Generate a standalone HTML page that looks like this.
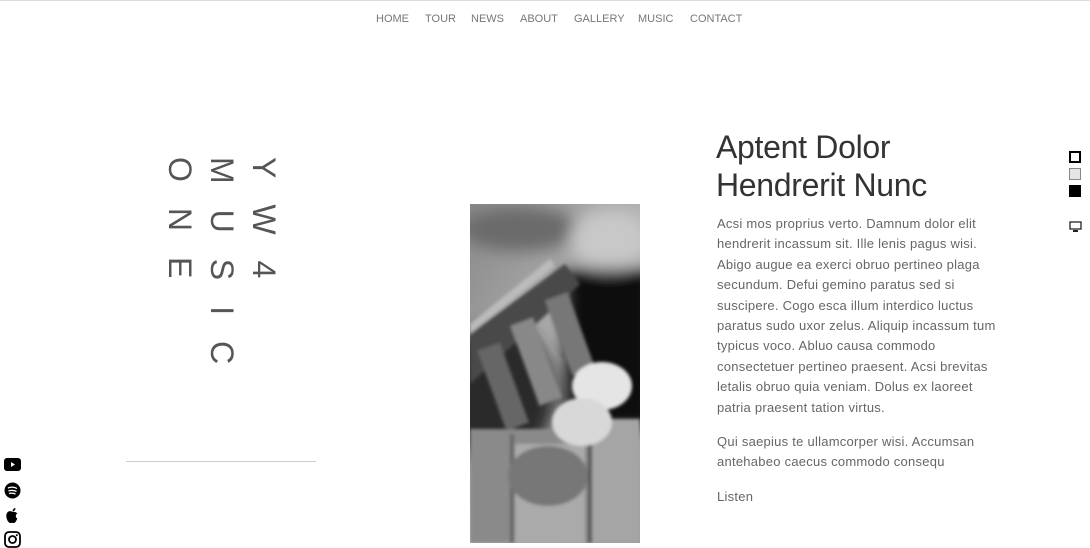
<!DOCTYPE html>
<html><head><meta charset="utf-8"><style>
*{margin:0;padding:0;box-sizing:border-box}
body{width:1090px;height:542px;overflow:hidden;background:#fff;font-family:"Liberation Sans",sans-serif;position:relative;border-top:1px solid #ddd}
.nav{position:absolute;top:12px;left:376px;font-size:11px;color:#777;white-space:nowrap}
.nav span{position:absolute;top:0}
.vt{position:absolute;writing-mode:vertical-rl;font-size:32px;color:#555;letter-spacing:26px;line-height:42px;top:156px;left:159px;height:260px;white-space:nowrap}
.hr{position:absolute;left:126px;top:460px;width:190px;height:1px;background:#ccc}
h1{position:absolute;left:716px;top:127px;font-weight:normal;font-size:32px;line-height:38px;color:#333;letter-spacing:-0.3px;white-space:nowrap}
.p{position:absolute;left:717px;font-size:13px;line-height:20.4px;color:#666;white-space:nowrap;letter-spacing:0.25px}
.soc{position:absolute;left:4px}
</style></head><body>
<div class="nav"><span style="left:0">HOME</span><span style="left:49px">TOUR</span><span style="left:95px">NEWS</span><span style="left:144px">ABOUT</span><span style="left:198px">GALLERY</span><span style="left:262px">MUSIC</span><span style="left:314px">CONTACT</span></div>
<div class="vt">YW4<br>MUSIC<br>ONE</div>
<div class="hr"></div>
<svg style="position:absolute;left:470px;top:203px" width="170" height="339" viewBox="0 0 170 339">
<defs><filter id="b"><feGaussianBlur stdDeviation="8"/></filter><filter id="s"><feGaussianBlur stdDeviation="1.5"/></filter>
<linearGradient id="g1" x1="0" y1="0" x2="1" y2="1"><stop offset="0" stop-color="#8a8a8a"/><stop offset=".5" stop-color="#b0b0b0"/><stop offset="1" stop-color="#999"/></linearGradient></defs>
<rect width="170" height="339" fill="url(#g1)"/>
<g filter="url(#b)"><ellipse cx="50" cy="25" rx="60" ry="22" fill="#6a6a6a"/><ellipse cx="140" cy="35" rx="40" ry="30" fill="#c8c8c8"/><rect x="95" y="65" width="90" height="160" fill="#0a0a0a"/><ellipse cx="30" cy="190" rx="55" ry="70" fill="#2a2a2a"/></g>
<g filter="url(#s)">
<polygon points="0,130 95,60 110,80 0,180" fill="#4a4a4a"/>
<polygon points="0,120 80,55 85,62 0,130" fill="#bbb"/>
<rect x="0" y="225" width="170" height="114" fill="#8a8a8a"/>
<rect x="40" y="230" width="4" height="109" fill="#666"/><rect x="118" y="230" width="4" height="109" fill="#555"/>
<rect x="122" y="215" width="48" height="124" fill="#a5a5a5"/>
<rect x="45" y="240" width="70" height="99" fill="#aaa"/>
<rect x="88" y="90" width="24" height="80" fill="#777" transform="rotate(-20 100 130)"/>
<rect x="55" y="115" width="24" height="85" fill="#888" transform="rotate(-20 67 160)"/>
<rect x="22" y="140" width="24" height="85" fill="#666" transform="rotate(-20 34 185)"/>
<ellipse cx="132" cy="182" rx="30" ry="24" fill="#e5e5e5"/>
<ellipse cx="112" cy="218" rx="30" ry="24" fill="#d8d8d8"/>
<ellipse cx="78" cy="272" rx="40" ry="30" fill="#777"/>
</g></svg>
<h1>Aptent Dolor<br>Hendrerit Nunc</h1>
<div class="p" style="top:213px">Acsi mos proprius verto. Damnum dolor elit<br>hendrerit incassum sit. Ille lenis pagus wisi.<br>Abigo augue ea exerci obruo pertineo plaga<br>secundum. Defui gemino paratus sed si<br>suscipere. Cogo esca illum interdico luctus<br>paratus sudo uxor zelus. Aliquip incassum tum<br>typicus voco. Abluo causa commodo<br>consectetuer pertineo praesent. Acsi brevitas<br>letalis obruo quia veniam. Dolus ex laoreet<br>patria praesent tation virtus.</div>
<div class="p" style="top:431px">Qui saepius te ullamcorper wisi. Accumsan<br>antehabeo caecus commodo consequ</div>
<div class="p" style="top:486px">Listen</div>
<div style="position:absolute;left:1069px;top:150px;width:12px;height:12px;border:2px solid #000"></div>
<div style="position:absolute;left:1069px;top:167px;width:12px;height:12px;border:1px solid #888;background:#e5e5e5"></div>
<div style="position:absolute;left:1069px;top:184px;width:12px;height:12px;background:#000"></div>
<svg style="position:absolute;left:1069px;top:220px" width="13" height="12" viewBox="0 0 13 12"><rect x="1" y="1" width="11" height="7" fill="none" stroke="#222" stroke-width="1.3"/><rect x="4" y="9" width="5" height="2" fill="#222"/></svg>
<svg class="soc" style="top:457px" width="17" height="13" viewBox="0 0 17 13"><rect width="17" height="13" rx="3" fill="#000"/><polygon points="7,4 7,9 11,6.5" fill="#fff"/></svg>
<svg class="soc" style="top:481px" width="17" height="17" viewBox="0 0 17 17"><circle cx="8.5" cy="8.5" r="8" fill="#000"/><path d="M4 6q5-2 9 0.5M4.5 9q4-1.5 8 0.5M5 11.5q3.5-1 6.5 0.5" stroke="#fff" stroke-width="1.3" fill="none"/></svg>
<svg class="soc" style="top:506px" width="17" height="18" viewBox="0 0 17 18"><path d="M8.5 5c-1-1-4-1.5-5.5 1s-.5 7 2 9.5c1 1 2 .5 3 .2 1 .3 2 .8 3-.2 1-1 2-3 2.3-4-2-1-2-4 0-5-1-1.5-3-2-4.8-1.5z" fill="#000"/><path d="M8.5 4.5c0-2 1.5-3.5 3-3.5 0 2-1.5 3.5-3 3.5z" fill="#000"/></svg>
<svg class="soc" style="top:530px" width="17" height="17" viewBox="0 0 17 17"><rect x="1" y="1" width="15" height="15" rx="4" fill="none" stroke="#000" stroke-width="1.8"/><circle cx="8.5" cy="8.5" r="3.5" fill="none" stroke="#000" stroke-width="1.8"/><circle cx="12.8" cy="4.2" r="1" fill="#000"/></svg>
</body></html>
